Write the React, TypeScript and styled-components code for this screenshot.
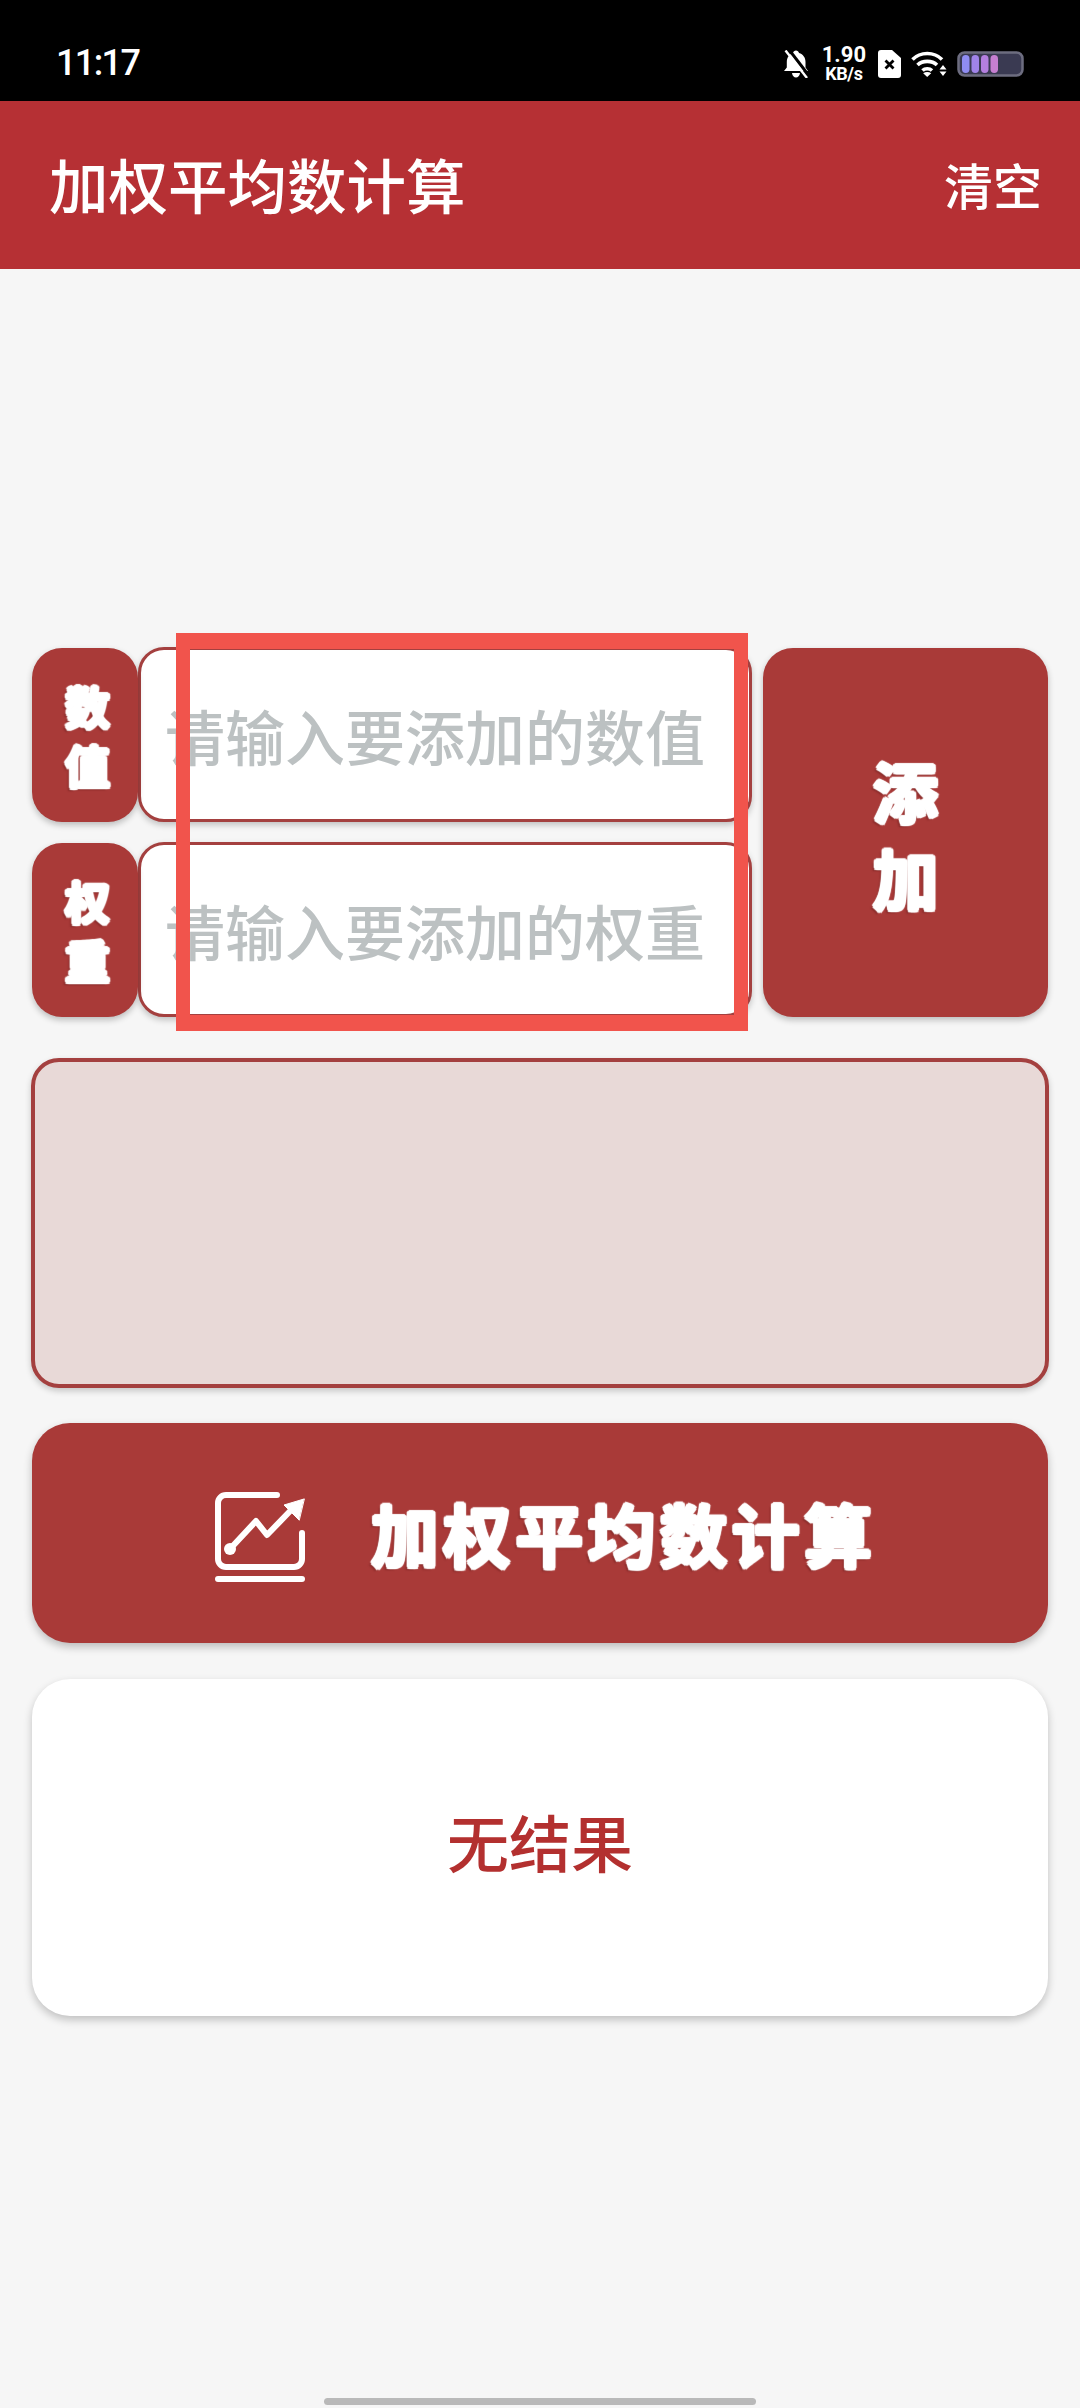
import React from "react";
import styled, { createGlobalStyle, css } from "styled-components";

const cjk = `"Noto Sans CJK SC", "Noto Sans", sans-serif`;

const Global = createGlobalStyle`
  html, body { margin: 0; padding: 0; background: #f6f6f6; }
  * { box-sizing: border-box; }
`;

const chunky = css`
  font-weight: 700;
  text-shadow:
    2px 0 1px #fff, -2px 0 1px #fff, 0 2px 1px #fff, 0 -2px 1px #fff,
    1.5px 1.5px 1px #fff, -1.5px 1.5px 1px #fff, 1.5px -1.5px 1px #fff, -1.5px -1.5px 1px #fff,
    -3px 3px 2px rgba(70, 10, 10, 0.35);
`;

const Page = styled.div`
  width: 1080px;
  height: 2408px;
  display: flex;
  flex-direction: column;
  background: #f6f6f6;
  font-family: ${cjk};
  overflow: hidden;
`;

const StatusBar = styled.div`
  height: 101px;
  flex: none;
  background: #000;
  color: #fff;
  display: flex;
  align-items: center;
  justify-content: space-between;
  padding: 27px 56px 0 56px;
`;

const Clock = styled.div`
  font: 500 36px/36px Roboto, sans-serif;
  letter-spacing: -1.6px;
  transform: translateY(-1px);
`;

const StatusIcons = styled.div`
  display: flex;
  align-items: center;
`;

const Speed = styled.div`
  display: flex;
  flex-direction: column;
  align-items: center;
  font-family: Roboto, sans-serif;
  font-weight: 700;
  margin: 0 12px 0 10px;
  transform: translateY(-1px);
`;

const SpeedValue = styled.span`
  font-size: 22px;
  line-height: 20px;
`;

const SpeedUnit = styled.span`
  font-size: 18px;
  line-height: 17px;
  letter-spacing: -0.4px;
`;

const Header = styled.header`
  height: 168px;
  flex: none;
  background: #b63034;
  color: #fff;
  display: flex;
  align-items: center;
  justify-content: space-between;
  padding: 0 38px 0 49px;
`;

const Title = styled.h1`
  margin: 0;
  font-size: 59.5px;
  line-height: 60px;
  font-weight: 500;
  transform: translateY(-2px);
`;

const ClearAction = styled.span`
  font-size: 49px;
  line-height: 48px;
  font-weight: 500;
  transform: translateY(-1px);
`;

const Main = styled.main`
  flex: 1;
  display: flex;
  flex-direction: column;
  padding: 378px 32px 0;
`;

const EntryRow = styled.section`
  position: relative;
  display: flex;
  gap: 11px;
  height: 370px;
`;

const Fields = styled.div`
  width: 720px;
  flex: none;
  display: flex;
  flex-direction: column;
  gap: 20px;
`;

const FieldRow = styled.div`
  flex: 1;
  display: flex;
`;

const FieldLabel = styled.div`
  width: 106px;
  flex: none;
  position: relative;
  z-index: 1;
  margin: 1px 0 0;
  padding-left: 5px;
  border-radius: 30px;
  background: #a93a38;
  box-shadow: 0 3px 6px rgba(0, 0, 0, 0.24);
  color: #fff;
  display: flex;
  align-items: center;
  justify-content: center;
  font-size: 45px;
  line-height: 59px;
  ${chunky}
  text-align: center;
`;

const LabelText = styled.span`
  width: 50px;
  display: block;
  word-break: break-all;
`;

const FieldInput = styled.input`
  flex: 1;
  min-width: 0;
  height: 100%;
  border: 3px solid #a4403f;
  border-radius: 26px;
  background: #fff;
  box-shadow: 0 3px 6px rgba(0, 0, 0, 0.22);
  padding: 0 0 0 24px;
  font-family: ${cjk};
  font-size: 60px;
  font-weight: 500;
  outline: none;
  &::placeholder {
    color: #bcc1c2;
    opacity: 1;
  }
`;

const AddButton = styled.button`
  flex: 1;
  margin: 1px 0 0;
  border: none;
  border-radius: 30px;
  background: #a93a38;
  box-shadow: 0 3px 6px rgba(0, 0, 0, 0.24);
  color: #fff;
  font-family: ${cjk};
  font-size: 66px;
  line-height: 87px;
  ${chunky}
  padding: 0;
  display: flex;
  align-items: center;
  justify-content: center;
`;

const AddText = styled.span`
  width: 70px;
  display: block;
  word-break: break-all;
`;

const AnnotationFrame = styled.div`
  position: absolute;
  left: 144px;
  top: -14px;
  width: 572px;
  height: 398px;
  border: solid #f1544c;
  border-width: 16px 14px;
  pointer-events: none;
  z-index: 2;
`;

const ListArea = styled.div`
  height: 330px;
  margin: 41px -1px 0;
  border: 4px solid #a4403f;
  border-radius: 28px;
  background: #e8d9d7;
  box-shadow: 0 3px 6px rgba(0, 0, 0, 0.2);
`;

const CalcButton = styled.button`
  height: 220px;
  margin-top: 35px;
  border: none;
  border-radius: 38px;
  background: #a93a38;
  box-shadow: 0 4px 8px rgba(0, 0, 0, 0.24);
  color: #fff;
  display: flex;
  align-items: center;
  justify-content: center;
  gap: 66px;
  padding: 0 0 0 11px;
  font-family: ${cjk};
`;

const CalcIconSlot = styled.span`
  display: flex;
  padding-top: 7px;
`;

const CalcLabel = styled.span`
  font-size: 68px;
  line-height: 72px;
  letter-spacing: 4.2px;
  ${chunky}
`;

const ResultCard = styled.div`
  height: 337px;
  margin-top: 36px;
  border-radius: 38px;
  background: #fff;
  box-shadow: 0 4px 8px rgba(0, 0, 0, 0.22);
  color: #b3302f;
  display: flex;
  align-items: center;
  justify-content: center;
  font-size: 62px;
  font-weight: 500;
  padding-bottom: 14px;
`;

const HomeBar = styled.div`
  width: 432px;
  height: 7px;
  flex: none;
  margin: 0 auto 3px;
  border-radius: 4px;
  background: #b9b9b9;
`;

const BellOffIcon = () => (
  <svg width="26" height="28" viewBox="0 0 26 28" fill="none" style={{ marginLeft: -3, marginRight: 3 }}>
    <path
      d="M13 0.500c1.500 0 2.700 1 3 2.600 4.200 1.200 6.500 4.800 6.500 9v5.400l2.500 3.500H1l2.800-3.500v-5.400c0-4.200 2.300-7.800 6.200-9 .3-1.600 1.500-2.600 3-2.600ZM9 23h8c-.4 2.800-2 4.500-4 4.500S9.400 25.800 9 23Z"
      fill="#fff"
    />
    <path d="M5.500 -1 27 27" stroke="#000" strokeWidth="3" />
    <path d="M2.500 0.500 24 28" stroke="#fff" strokeWidth="2.400" />
  </svg>
);

const SimIcon = () => (
  <svg width="23" height="28" viewBox="0 0 23 28" style={{ marginRight: 10 }}>
    <path
      d="M3 0h11l9 8v17a3 3 0 0 1-3 3H3a3 3 0 0 1-3-3V3a3 3 0 0 1 3-3Z"
      fill="#fff"
    />
    <path d="m7.500 10.500 8 8M15.500 10.500l-8 8" stroke="#000" strokeWidth="2.800" />
  </svg>
);

const WifiIcon = () => (
  <svg width="36" height="26" viewBox="0 0 36 26" fill="none" style={{ marginRight: 10 }}>
    <path d="M1.500 8.500C9.500 0.500 23 0.500 31 8.500" stroke="#fff" strokeWidth="3.600" />
    <path d="M6.500 14c5-4.800 14.500-4.800 19.500 0" stroke="#fff" strokeWidth="3.600" />
    <path d="M11.500 19.500c2.500-2.400 7-2.400 9.500 0" stroke="#fff" strokeWidth="3.600" />
    <path d="m16.200 26-4-3.800c2.300-1.700 5.700-1.700 8 0Z" fill="#fff" />
    <path d="m32 14 3.500 4.500h-7Z M28.500 20.500h7L32 25Z" fill="#fff" />
  </svg>
);

const BatteryIcon = () => {
  const cells = ["#8f8cf2", "#a083e8", "#b47fdf", "#c67fd0"];
  return (
    <svg width="67" height="26" viewBox="0 0 67 26">
      <rect x="1.500" y="1.500" width="64" height="23" rx="6" fill="#3a3a52" stroke="#6d6d80" strokeWidth="2.500" />
      {cells.map((color, i) => (
        <rect key={color} x={5 + i * 9.500} y="4" width="7.500" height="18" rx="3.700" fill={color} />
      ))}
    </svg>
  );
};

const ChartIcon = () => (
  <svg width="90" height="90" viewBox="0 0 90 90" fill="none" stroke="#fff" strokeWidth="6" strokeLinecap="round" strokeLinejoin="round">
    <path d="M62 3H11a8 8 0 0 0-8 8v56a8 8 0 0 0 8 8h68a8 8 0 0 0 8-8V41" />
    <path d="M15 57 41 29 52 43 80 14" />
    <circle cx="15" cy="57" r="6" fill="#fff" stroke="none" />
    <path d="M89 7 69 13 84 28Z" fill="#fff" strokeWidth="1" />
    <path d="M3 87H87" />
  </svg>
);

export default function App() {
  return (
    <Page>
      <Global />
      <StatusBar>
        <Clock>11:17</Clock>
        <StatusIcons>
          <BellOffIcon />
          <Speed>
            <SpeedValue>1.90</SpeedValue>
            <SpeedUnit>KB/s</SpeedUnit>
          </Speed>
          <SimIcon />
          <WifiIcon />
          <BatteryIcon />
        </StatusIcons>
      </StatusBar>
      <Header>
        <Title>加权平均数计算</Title>
        <ClearAction>清空</ClearAction>
      </Header>
      <Main>
        <EntryRow>
          <Fields>
            <FieldRow>
              <FieldLabel><LabelText>数值</LabelText></FieldLabel>
              <FieldInput placeholder="请输入要添加的数值" />
            </FieldRow>
            <FieldRow>
              <FieldLabel><LabelText>权重</LabelText></FieldLabel>
              <FieldInput placeholder="请输入要添加的权重" />
            </FieldRow>
          </Fields>
          <AddButton><AddText>添加</AddText></AddButton>
          <AnnotationFrame />
        </EntryRow>
        <ListArea />
        <CalcButton>
          <CalcIconSlot><ChartIcon /></CalcIconSlot>
          <CalcLabel>加权平均数计算</CalcLabel>
        </CalcButton>
        <ResultCard>无结果</ResultCard>
      </Main>
      <HomeBar />
    </Page>
  );
}
